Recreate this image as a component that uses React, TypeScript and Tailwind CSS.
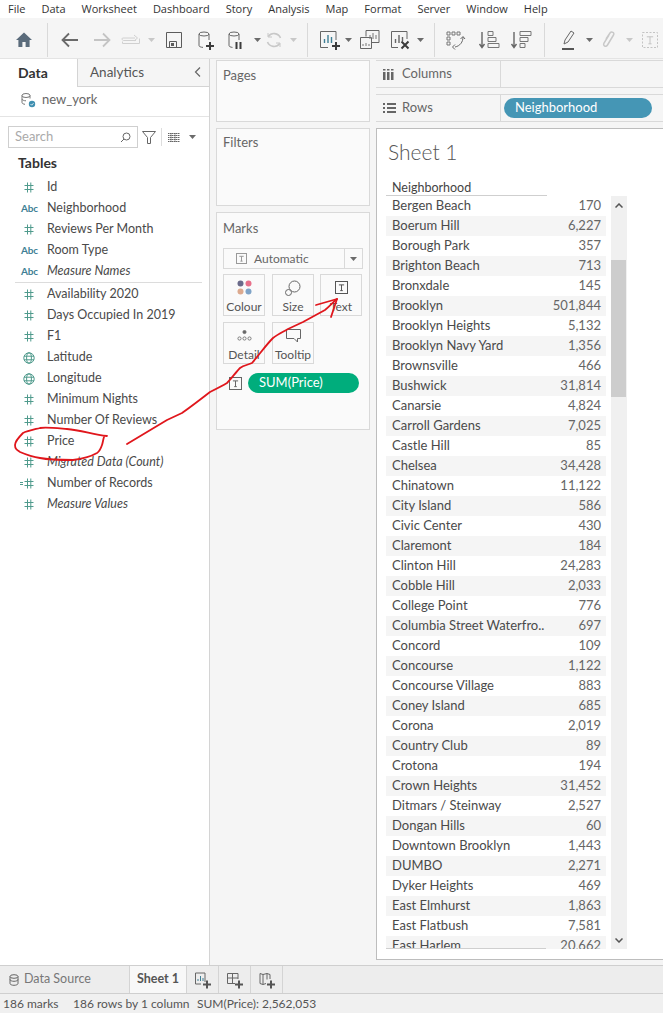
import type { ReactNode } from "react";

const rows: [string, string][] = [
  ["Bergen Beach", "170"], ["Boerum Hill", "6,227"], ["Borough Park", "357"], ["Brighton Beach", "713"],
  ["Bronxdale", "145"], ["Brooklyn", "501,844"], ["Brooklyn Heights", "5,132"], ["Brooklyn Navy Yard", "1,356"],
  ["Brownsville", "466"], ["Bushwick", "31,814"], ["Canarsie", "4,824"], ["Carroll Gardens", "7,025"],
  ["Castle Hill", "85"], ["Chelsea", "34,428"], ["Chinatown", "11,122"], ["City Island", "586"],
  ["Civic Center", "430"], ["Claremont", "184"], ["Clinton Hill", "24,283"], ["Cobble Hill", "2,033"],
  ["College Point", "776"], ["Columbia Street Waterfro..", "697"], ["Concord", "109"], ["Concourse", "1,122"],
  ["Concourse Village", "883"], ["Coney Island", "685"], ["Corona", "2,019"], ["Country Club", "89"],
  ["Crotona", "194"], ["Crown Heights", "31,452"], ["Ditmars / Steinway", "2,527"], ["Dongan Hills", "60"],
  ["Downtown Brooklyn", "1,443"], ["DUMBO", "2,271"], ["Dyker Heights", "469"], ["East Elmhurst", "1,863"],
  ["East Flatbush", "7,581"], ["East Harlem", "20,662"],
];

const menu = ["File", "Data", "Worksheet", "Dashboard", "Story", "Analysis", "Map", "Format", "Server", "Window", "Help"];

type FieldKind = "hash" | "abc" | "globe" | "calc";
const dimensions: [string, FieldKind, boolean][] = [
  ["Id", "hash", false],
  ["Neighborhood", "abc", false],
  ["Reviews Per Month", "hash", false],
  ["Room Type", "abc", false],
  ["Measure Names", "abc", true],
];
const measures: [string, FieldKind, boolean][] = [
  ["Availability 2020", "hash", false],
  ["Days Occupied In 2019", "hash", false],
  ["F1", "hash", false],
  ["Latitude", "globe", false],
  ["Longitude", "globe", false],
  ["Minimum Nights", "hash", false],
  ["Number Of Reviews", "hash", false],
  ["Price", "hash", false],
  ["Migrated Data (Count)", "hash", true],
  ["Number of Records", "calc", false],
  ["Measure Values", "hash", true],
];

const iconInset: Record<FieldKind, string> = {
  hash: "pl-[24px]",
  abc: "pl-[21px]",
  globe: "pl-[23px]",
  calc: "pl-[20px]",
};

function Svg({ children, size = 24, className = "" }: { children: ReactNode; size?: number; className?: string }) {
  return (
    <svg width={size} height={size} viewBox={`0 0 ${size} ${size}`} fill="none" className={`shrink-0 ${className}`}>
      {children}
    </svg>
  );
}

function Caret({ light = false, className = "" }: { light?: boolean; className?: string }) {
  return (
    <svg width="7" height="4" viewBox="0 0 7 4" className={className}>
      <path d="M0 0h7L3.5 4z" fill={light ? "#c8c8c8" : "#6b6b6b"} />
    </svg>
  );
}

function Hash() {
  return (
    <svg width="10" height="11" viewBox="0 0 10 11" fill="none" stroke="#4f9a8c" strokeWidth="1">
      <path d="M3.5 0.5v10M6.8 0.5v10M0.5 3.5h9M0.5 7.5h9" />
    </svg>
  );
}

function Globe() {
  return (
    <svg width="12" height="12" viewBox="0 0 12 12" fill="none" stroke="#4f9a8c" strokeWidth="1">
      <circle cx="6" cy="6" r="5.2" />
      <ellipse cx="6" cy="6" rx="2.4" ry="5.2" />
      <path d="M1 4.2h10M1 7.8h10" />
    </svg>
  );
}

function FieldIcon({ kind }: { kind: FieldKind }) {
  if (kind === "abc") return <span className="text-[10px] font-bold tracking-[-0.2px] text-[#3f7f95]">Abc</span>;
  if (kind === "globe") return <Globe />;
  if (kind === "calc")
    return (
      <span className="flex items-center gap-[1px]">
        <span className="h-[3px] w-[3px] border-y border-[#4f9a8c]" />
        <Hash />
      </span>
    );
  return <Hash />;
}

function Field({ name, kind, italic }: { name: string; kind: FieldKind; italic: boolean }) {
  return (
    <div className="flex h-[21px] items-center">
      <span className={`flex w-[47px] shrink-0 items-center ${iconInset[kind]}`}>
        <FieldIcon kind={kind} />
      </span>
      <span className={`text-[12.5px] text-[#4a4a4a] ${italic ? "italic" : ""}`}>{name}</span>
    </div>
  );
}

function TBox({ size = 14, dashed = false, color = "#666" }: { size?: number; dashed?: boolean; color?: string }) {
  const s = size;
  return (
    <svg width={s} height={s} viewBox={`0 0 ${s} ${s}`} fill="none" stroke={color} strokeWidth="1">
      <rect x="0.5" y="0.5" width={s - 1} height={s - 1} strokeDasharray={dashed ? "2 1.5" : undefined} />
      <path d={`M${s * 0.3} ${s * 0.3}H${s * 0.7}M${s * 0.5} ${s * 0.3}V${s * 0.74}M${s * 0.4} ${s * 0.74}H${s * 0.6}`} />
    </svg>
  );
}

function Plus({ x, y }: { x: number; y: number }) {
  return <path d={`M${x - 4} ${y}h8M${x} ${y - 4}v8`} stroke="#3c3c3c" strokeWidth="2" />;
}

function Toolbar() {
  return (
    <div className="flex h-[40px] items-center bg-[#f5f5f5] pt-[3px]">
      <Svg size={18} className="ml-[15px]">
        <path d="M9 1.5L1 9h2.4v7h4v-5h3.2v5h4V9H17z" fill="#5a6b7b" />
      </Svg>
      <div className="ml-[14px] h-[34px] w-px bg-[#d9d9d9]" />
      <Svg className="ml-[10px]">
        <path d="M20 12H5M11 5.5L4.5 12l6.5 6.5" stroke="#6a6a6a" strokeWidth="1.8" />
      </Svg>
      <Svg className="ml-[8px]">
        <path d="M4 12h15M13 5.5l6.5 6.5-6.5 6.5" stroke="#c4c4c4" strokeWidth="1.8" />
      </Svg>
      <Svg className="ml-[5px]">
        <path d="M17 12.5H4.5a1.5 1.5 0 0 1-1-2.5H16M15 7l3.5 3-3.5 3M3.5 13.5v2h17v-5" stroke="#d0d0d0" strokeWidth="1" />
      </Svg>
      <Caret light className="ml-[5px]" />
      <Svg size={18} className="ml-[10px]">
        <path d="M1.5 1.5h15v15h-15zM4.5 16.5v-6h7v6" stroke="#5c5c5c" strokeWidth="1" />
        <rect x="6" y="12" width="3" height="3" fill="#5c5c5c" />
      </Svg>
      <Svg className="ml-[11px]">
        <ellipse cx="10" cy="6" rx="5" ry="2" stroke="#666" />
        <path d="M5 6v11.5c0 1 1.5 1.7 4 1.9M15 6v6" stroke="#666" />
        <Plus x={16} y={18} />
      </Svg>
      <Svg className="ml-[7px]">
        <ellipse cx="9" cy="6" rx="5" ry="2" stroke="#666" />
        <path d="M4 6v11.5c0 1 1.5 1.7 3.5 1.9M14 6v6" stroke="#666" />
        <path d="M11.5 14v7M15.5 14v7" stroke="#3c3c3c" strokeWidth="2" />
      </Svg>
      <Caret className="ml-[5px]" />
      <Svg size={18} className="ml-[4px]">
        <path d="M15.5 7A7 7 0 0 0 3.3 5.5M2.5 11a7 7 0 0 0 12.2 1.5" stroke="#c8c8c8" strokeWidth="1.6" />
        <path d="M3 2v4h4M15 16v-4h-4" stroke="#c8c8c8" strokeWidth="1" />
      </Svg>
      <Caret light className="ml-[7px]" />
      <div className="ml-[10px] h-[34px] w-px bg-[#d9d9d9]" />
      <Svg className="ml-[10px]">
        <path d="M18 12V3.5H2.5v16H10" stroke="#666" />
        <path d="M6.5 15v-4M10 15V7M13.5 15v-6" stroke="#3f7f95" strokeWidth="1.4" />
        <Plus x={18} y={18} />
      </Svg>
      <Caret className="ml-[3px]" />
      <Svg className="ml-[6px]">
        <path d="M8 8.5V2.5h13v12h-7" stroke="#666" />
        <path d="M2.5 9.5h11v11h-11z" stroke="#666" />
        <path d="M12 11V7M15 11V5M18 11V7M5 18v-2M8 18v-3M11 18v-2" stroke="#777" />
      </Svg>
      <Svg className="ml-[7px]">
        <path d="M18 11V3.5H2.5v16H9" stroke="#666" />
        <path d="M6.5 15v-4M10 15V7M13.5 13V9" stroke="#666" strokeWidth="1.4" />
        <path d="M12.5 13.5l7 7M19.5 13.5l-7 7" stroke="#3c3c3c" strokeWidth="2" />
      </Svg>
      <Caret className="ml-[4px]" />
      <div className="ml-[10px] h-[34px] w-px bg-[#d9d9d9]" />
      <Svg className="ml-[8px]">
        <path d="M4 4h3v3H4zM9 4h3v3H9zM14 4h3v3h-3zM4 9h3v3H4zM4 14h3v3H4z" stroke="#777" />
        <path d="M20 9c0 5-3 9-8 10M12 16.5L9.5 19l2.5 2.5M17.5 11L20 8.5l2 2.5" stroke="#666" />
      </Svg>
      <Svg className="ml-[11px]">
        <path d="M4 4v15M1.5 16L4 19.5 6.5 16" stroke="#666" strokeWidth="1.4" />
        <path d="M10 3.500h5v4h-5zM10 9.500h8v4h-8zM10 15.500h11v4H10z" stroke="#777" />
      </Svg>
      <Svg className="ml-[8px]">
        <path d="M4 4v15M1.500 16L4 19.500 6.500 16" stroke="#666" strokeWidth="1.4" />
        <path d="M10 3.500h11v4H10zM10 9.500h8v4h-8zM10 15.500h5v4h-5z" stroke="#777" />
      </Svg>
      <div className="ml-[10px] h-[34px] w-px bg-[#d9d9d9]" />
      <Svg className="ml-[12px]">
        <path d="M7 16l1-4 6-9 3 2-6 9z" stroke="#666" />
        <path d="M5 21h12" stroke="#555" strokeWidth="2" />
      </Svg>
      <Caret className="ml-[5px]" />
      <Svg className="ml-[4px]">
        <path d="M9 11l4-6c1.500-2 5-.5 3.500 2l-6 10c-1.500 2.500-5 1-3.500-2l5-8" stroke="#c8c8c8" strokeWidth="1.500" />
      </Svg>
      <Caret light className="ml-[5px]" />
      <span className="ml-[9px]">
        <TBox size={16} dashed color="#c4c4c4" />
      </span>
    </div>
  );
}

function DataPane() {
  return (
    <div className="w-[210px] shrink-0 border-r border-[#d4d4d4] bg-white">
      <div className="flex h-[28px] items-stretch">
        <div className="flex w-[77px] items-center pb-[1px] pl-[18px] text-[14px] font-bold text-[#333]">Data</div>
        <div className="flex flex-1 items-center justify-between border-b border-l border-[#d4d4d4] bg-[#f5f5f5] pb-[1px] pl-[12px] pr-[8px] text-[13.5px] text-[#555]">
          <span>Analytics</span>
          <svg width="7" height="10" viewBox="0 0 7 10" fill="none" stroke="#666" strokeWidth="1.2">
            <path d="M6 0.500L1.500 5 6 9.500" />
          </svg>
        </div>
      </div>
      <div className="flex h-[30px] items-center border-b border-[#e4e4e4] pb-[3px] pl-[20px]">
        <Svg size={16}>
          <ellipse cx="6" cy="3.500" rx="4" ry="2" stroke="#777" />
          <path d="M2 3.500v7c0 1 1.500 1.700 3 1.800M10 3.500v3M2 7c0 1 2 1.800 4 1.800" stroke="#777" />
          <circle cx="12" cy="12" r="3.200" fill="#3f8fb0" />
          <path d="M10.500 12l1.200 1.200 1.800-2" stroke="#fff" strokeWidth="0.8" />
        </Svg>
        <span className="ml-[6px] text-[13px] text-[#666]">new_york</span>
      </div>
      <div className="flex h-[36px] items-center pl-[8px] pt-[4px]">
        <div className="flex h-[22px] w-[130px] items-center justify-between border border-[#cfcfcf] pl-[6px] pr-[6px] text-[13px] text-[#aaa]">
          <span>Search</span>
          <svg width="11" height="11" viewBox="0 0 11 11" fill="none" stroke="#666" strokeWidth="1">
            <circle cx="6.500" cy="4.500" r="3.500" />
            <path d="M4 7L1 10" />
          </svg>
        </div>
        <svg width="14" height="13" viewBox="0 0 14 13" fill="none" stroke="#666" strokeWidth="1" className="ml-[4px]">
          <path d="M0.500 0.500h13L8.500 6.500v6h-3v-6z" />
        </svg>
        <div className="ml-[5px] h-[18px] w-px bg-[#ddd]" />
        <svg width="12" height="9" viewBox="0 0 12 9" fill="none" stroke="#666" strokeWidth="1" className="ml-[6px]">
          <path d="M0 0.500h12M0 2.500h12M0 4.500h12M0 6.500h12M0 8.500h12M3 0v9M7 0v9" strokeDasharray="1.500 0.500" />
        </svg>
        <Caret className="ml-[9px]" />
      </div>
      <div className="pl-[18px] text-[14px] font-bold leading-[20px] text-[#333]">Tables</div>
      <div className="pt-[4px]">
        {dimensions.map(([name, kind, italic]) => (
          <Field key={name} name={name} kind={kind} italic={italic} />
        ))}
      </div>
      <div className="ml-[15px] mr-[7px] h-px bg-[#dcdcdc]" />
      <div className="pt-[1px]">
        {measures.map(([name, kind, italic]) => (
          <Field key={name} name={name} kind={kind} italic={italic} />
        ))}
      </div>
    </div>
  );
}

function MarkCard({ label, children }: { label: string; children: ReactNode }) {
  return (
    <div className="flex h-[42px] w-[42px] flex-col items-center border border-[#d9d9d9] bg-[#fafafa]">
      <div className="flex h-[25px] items-center justify-center">{children}</div>
      <span className="text-[12px] leading-[14px] text-[#555]">{label}</span>
    </div>
  );
}

function Middle() {
  return (
    <div className="flex w-[166px] shrink-0 flex-col gap-[6px] bg-[#f5f5f5] px-[6px] pt-[1px]">
      <div className="h-[62px] border border-[#d9d9d9] bg-[#fafafa] pl-[6px] pt-[5px] text-[13px] text-[#666]">Pages</div>
      <div className="h-[78px] border border-[#d9d9d9] bg-[#fafafa] pl-[6px] pt-[4px] text-[13px] text-[#666]">Filters</div>
      <div className="h-[218px] border border-[#d9d9d9] bg-[#fafafa] px-[6px] pt-[6px]">
        <div className="text-[13px] leading-[18px] text-[#666]">Marks</div>
        <div className="mt-[11px] flex h-[21px] items-center border border-[#d9d9d9] bg-[#fafafa]">
          <span className="ml-[12px]">
            <TBox size={11} color="#999" />
          </span>
          <span className="ml-[7px] flex-1 text-[12px] text-[#666]">Automatic</span>
          <span className="flex h-full w-[18px] items-center justify-center border-l border-[#d9d9d9]">
            <Caret />
          </span>
        </div>
        <div className="mt-[5px] grid grid-cols-[43px_42px_42px] gap-x-[6px] gap-y-[6px]">
          <MarkCard label="Colour">
            <svg width="15" height="15" viewBox="0 0 15 15">
              <circle cx="3.500" cy="3.500" r="3" fill="#6a6a8a" />
              <circle cx="11.500" cy="3.500" r="3" fill="#e8708a" />
              <circle cx="3.500" cy="11.500" r="3" fill="#dca98e" />
              <circle cx="11.500" cy="11.500" r="3" fill="#7fa3c7" />
            </svg>
          </MarkCard>
          <MarkCard label="Size">
            <svg width="16" height="16" viewBox="0 0 16 16" fill="none" stroke="#666">
              <circle cx="9.500" cy="6.500" r="5.500" />
              <circle cx="3.500" cy="12.500" r="3" fill="#fafafa" />
            </svg>
          </MarkCard>
          <MarkCard label="Text">
            <TBox size={13} color="#555" />
          </MarkCard>
          <MarkCard label="Detail">
            <svg width="15" height="11" viewBox="0 0 15 11" fill="none" stroke="#666" strokeWidth="0.8">
              <circle cx="7.500" cy="2" r="1.600" fill="#666" />
              <circle cx="2.500" cy="8.500" r="1.600" />
              <circle cx="7.500" cy="8.500" r="1.600" />
              <circle cx="12.500" cy="8.500" r="1.600" />
            </svg>
          </MarkCard>
          <MarkCard label="Tooltip">
            <svg width="15" height="14" viewBox="0 0 15 14" fill="none" stroke="#666">
              <path d="M0.500 0.500h14v9h-3v3.500l-3.500-3.500h-7.500z" />
            </svg>
          </MarkCard>
        </div>
        <div className="mt-[9px] flex items-center pl-[6px]">
          <TBox size={13} color="#666" />
          <span className="ml-[6px] flex h-[20px] w-[111px] items-center rounded-full bg-[#00ad7c] pl-[11px] text-[13px] text-white">
            SUM(Price)
          </span>
        </div>
      </div>
    </div>
  );
}

function Shelf({ label, icon, children }: { label: string; icon: ReactNode; children?: ReactNode }) {
  return (
    <div className="flex h-[28px] items-stretch border-y border-[#d9d9d9]">
      <div className="flex w-[125px] items-center border-r border-[#d9d9d9] pl-[7px]">
        <span className="flex w-[19px] items-center">{icon}</span>
        <span className="text-[13px] text-[#666]">{label}</span>
      </div>
      <div className="flex flex-1 items-center pl-[3px]">{children}</div>
    </div>
  );
}

function Sheet() {
  return (
    <div className="flex min-w-0 flex-1 flex-col bg-[#f5f5f5] pt-[1px]">
      <Shelf
        label="Columns"
        icon={
          <svg width="11" height="11" viewBox="0 0 11 11" fill="#666">
            <path d="M0 3h2.500v8H0zM4 3h2.500v8H4zM8 3h2.500v8H8zM0 0h2.500v1.500H0zM4 0h2.500v1.500H4zM8 0h2.500v1.500H8z" />
          </svg>
        }
      />
      <div className="mt-[6px]">
        <Shelf
          label="Rows"
          icon={
            <svg width="13" height="10" viewBox="0 0 13 10" fill="#666">
              <path d="M0 0h2v2H0zM4 0h9v2H4zM0 4h2v2H0zM4 4h9v2H4zM0 8h2v2H0zM4 8h9v2H4z" />
            </svg>
          }
        >
          <span className="flex h-[20px] w-[148px] items-center rounded-full bg-[#4596b5] pl-[11px] text-[13px] text-white">
            Neighborhood
          </span>
        </Shelf>
      </div>
      <div className="mt-[6px] h-[832px] border-y border-l border-[#bdbdbd] bg-white pl-[9px]">
        <div className="pl-[2px] pt-[8px] text-[21px] font-light leading-[30px] text-[#555]">Sheet 1</div>
        <div className="mt-[11px] h-[18px] w-[161px] border-b border-[#cfcfcf] pl-[6px] pt-[2px] text-[12.5px] leading-[15px] text-[#444]">
          Neighborhood
        </div>
        <div className="flex gap-[5px]">
          <div className="relative h-[753px] w-[220px] overflow-hidden">
            {rows.map(([name, value]) => (
              <div key={name} className="flex h-[20px] items-center justify-between pl-[6px] pr-[5px] text-[13px] text-[#4a4a4a] even:bg-[#f5f5f5]">
                <span>{name}</span>
                <span className="text-[#666]">{value}</span>
              </div>
            ))}
            <div className="absolute bottom-0 left-0 h-px w-[160px] bg-[#cfcfcf]" />
          </div>
          <div className="flex h-[753px] w-[16px] flex-col bg-[#f0f0f0]">
            <div className="flex h-[64px] justify-center pt-[7px]">
              <svg width="8" height="5" viewBox="0 0 8 5" fill="none" stroke="#555" strokeWidth="1.500">
                <path d="M0.500 4.500L4 1l3.500 3.500" />
              </svg>
            </div>
            <div className="h-[137px] w-[15px] bg-[#cdcdcd]" />
            <div className="flex flex-1 items-end justify-center pb-[6px]">
              <svg width="8" height="5" viewBox="0 0 8 5" fill="none" stroke="#555" strokeWidth="1.500">
                <path d="M0.500 0.500L4 4l3.500-3.500" />
              </svg>
            </div>
          </div>
        </div>
      </div>
    </div>
  );
}

function TabBox({ children }: { children: ReactNode }) {
  return <div className="flex w-[32px] items-center justify-center border-r border-[#d4d4d4]">{children}</div>;
}

export default function App() {
  return (
    <div className="relative h-[1013px] w-[663px] overflow-hidden bg-white font-['Lato',sans-serif]">
      <div className="flex h-[18px] items-center gap-[16px] bg-white pl-[8px] font-['Open_Sans',sans-serif] text-[11px] text-[#333]">
        {menu.map((m) => (
          <span key={m}>{m}</span>
        ))}
      </div>
      <Toolbar />
      <div className="flex h-[907px] border-t border-[#e4e4e4]">
        <DataPane />
        <Middle />
        <Sheet />
      </div>
      <div className="flex h-[29px] border-y border-[#cfcfcf] bg-[#ededed] text-[12.5px]">
        <div className="flex w-[130px] items-center border-r border-[#d4d4d4] pl-[9px] text-[#777]">
          <svg width="10" height="12" viewBox="0 0 10 12" fill="none" stroke="#666">
            <ellipse cx="5" cy="2.500" rx="4" ry="1.800" />
            <path d="M1 2.500v7c0 1 1.800 1.800 4 1.800s4-.8 4-1.800v-7M1 5.500c0 1 1.800 1.800 4 1.800s4-.8 4-1.800" />
          </svg>
          <span className="ml-[5px]">Data Source</span>
        </div>
        <div className="flex w-[57px] items-center justify-center border-r border-[#d4d4d4] bg-[#f8f8f8] font-bold text-[#555]">
          Sheet 1
        </div>
        <TabBox>
          <Svg size={18}>
            <path d="M11 11V2H1.500v11H7" stroke="#666" />
            <path d="M4 10V8M6.500 10V5M9 10V7" stroke="#3f7f95" />
            <path d="M13 9.500v8M9 13.500h8" stroke="#555" strokeWidth="2" />
          </Svg>
        </TabBox>
        <TabBox>
          <Svg size={18}>
            <path d="M9 12.500H1.500v-10H12V8M1.500 7h10.500M6.500 2.500v10" stroke="#666" />
            <path d="M13 9.500v8M9 13.500h8" stroke="#555" strokeWidth="2" />
          </Svg>
        </TabBox>
        <TabBox>
          <Svg size={18}>
            <path d="M2 2.500l3 1 4-1 3 1V8M2 2.500v10l3 1 3-1M5 3.500v10M9 2.500v6" stroke="#666" />
            <path d="M13 9.500v8M9 13.500h8" stroke="#555" strokeWidth="2" />
          </Svg>
        </TabBox>
      </div>
      <div className="flex h-[19px] items-center bg-[#f0f0f0] pl-[3px] text-[12px] text-[#555]">
        <span className="w-[70px]">186 marks</span>
        <span className="w-[124px]">186 rows by 1 column</span>
        <span>SUM(Price): 2,562,053</span>
      </div>
      {/* hand-drawn red annotation over the app */}
      <svg className="pointer-events-none absolute left-0 top-0" width="663" height="1013" fill="none" stroke="#e0161c" strokeWidth="1.8" strokeLinecap="round" strokeLinejoin="round">
        <path d="M107 436C92 434 80 430 67 429C55 428 46 427 40 428C32 430 27 431 23 433C19 437 15 441 15 445C15 449 17 450 20 452C27 455 33 457 40 458C50 460 62 460 73 460C82 459 90 457 97 453C100 451 101 448 102 445C103 442 103 440 104 437" />
        <path d="M127 444L167 420L182 413C192 406 201 399 210 392C216 389 222 386 227 383C232 378 236 372 240 368C244 365 248 365 252 363C259 355 266 345 273 338C278 334 283 332 288 329L303 322L325 310C330 306 333 302 337 299" />
        <path d="M316 305L337 299L331 317" />
      </svg>
    </div>
  );
}
